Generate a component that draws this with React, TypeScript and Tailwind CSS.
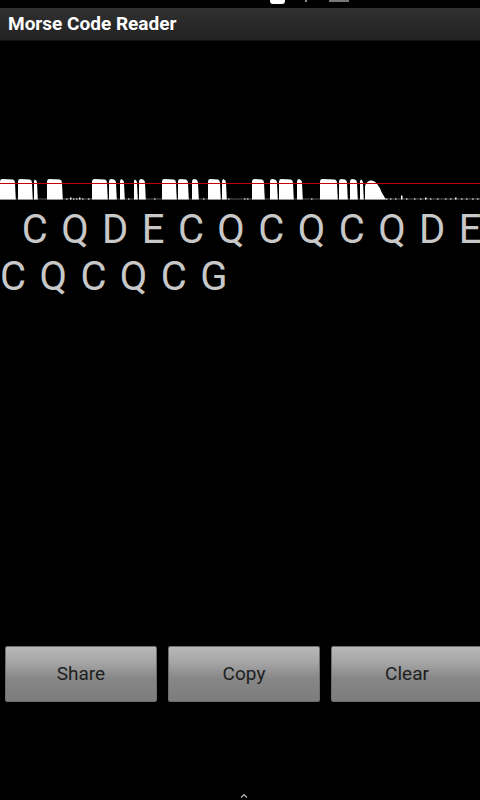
import React from "react";

const blocks: [number, number][] = [
  [0, 15], [18, 32], [34, 37], [47, 62], [92, 107], [109, 116], [120, 124],
  [134, 137], [139, 145], [162, 176], [178, 188], [192, 198], [208, 220],
  [222, 226], [252, 264], [270, 277], [279, 293], [297, 302], [320, 337],
  [339, 347], [350, 357], [360, 363],
];

const noise: [number, number][] = [
  [66, 1], [70, 2], [73, 1], [76, 1], [79, 2], [82, 1], [88, 1], [128, 1], [154, 1],
  [203, 1], [228, 1], [244, 1], [247, 1], [311, 1], [386, 1], [390, 1], [395, 1],
  [401, 4], [406, 1], [414, 1], [420, 1], [425, 2], [430, 1], [437, 1], [445, 1],
  [450, 1], [455, 2], [461, 1], [466, 1], [472, 1], [477, 1],
];

function Wave() {
  return (
    <svg width="480" height="24" viewBox="0 0 480 24" className="block">
      {blocks.map(([a, b], i) => (
        <path
          key={i}
          d={`M${a} 23.5 L${a} 5.5 Q${a} 3 ${a + 2} 3 L${b - 2} 3.5 Q${b} 4 ${b} 7 L${b + 0.8} 23.5 Z`}
          fill="#fff"
        />
      ))}
      <path d="M365 23.5 L365 10 Q367 4 372 4.5 Q378 6 382 17 L385 22 L386 23.5 Z" fill="#fff" />
      {noise.map(([x, h], i) => (
        <rect key={i} x={x} y={23.5 - h} width="1.5" height={h} fill="#fff" />
      ))}
      <rect x="0" y="22.5" width="480" height="1" fill="#fff" opacity="0.35" />
      <rect x="0" y="7" width="480" height="1" fill="#c00000" />
    </svg>
  );
}

function Btn({ label }: { label: string }) {
  return (
    <div className="w-[152px] h-[56px] shrink-0 rounded-[2px] border border-[#6e6e6e] bg-[linear-gradient(to_bottom,#b8b8b8_0%,#a4a4a4_30%,#878787_58%,#7c7c7c_100%)] flex items-center justify-center">
      <span className="text-[19px] text-[#1e1e1e]">{label}</span>
    </div>
  );
}

export default function App() {
  return (
    <div
      className="w-[480px] h-[800px] bg-black flex flex-col overflow-hidden"
      style={{ fontFamily: "Roboto, 'Noto Sans', sans-serif" }}
    >
      <div className="h-[8px] flex items-start">
        <div className="w-[270px]" />
        <div className="w-[15px] h-[4px] rounded-b-[3px] bg-white" />
        <div className="w-[20px]" />
        <div className="w-[2px] h-[2px] bg-[#888]" />
        <div className="w-[22px]" />
        <div className="w-[20px] h-[2px] bg-[#777]" />
      </div>
      <div className="h-[33px] bg-[linear-gradient(to_bottom,#303030,#222222)] border-b border-[#141414] flex items-center pl-[8px]">
        <span className="text-[19px] font-bold text-white">Morse Code Reader</span>
      </div>
      <div className="mt-[135px]">
        <Wave />
      </div>
      <div className="mt-[6px] text-[40px] leading-[47px] text-[#c8c8c8] tracking-[1.75px] whitespace-pre">
        <div className="pl-[10px]">{" C Q D E C Q C Q C Q D E"}</div>
        <div>{"C Q C Q C G"}</div>
      </div>
      <div className="mt-auto flex gap-[11px] pl-[5px]">
        <Btn label="Share" />
        <Btn label="Copy" />
        <Btn label="Clear" />
      </div>
      <div className="h-[91px]" />
      <div className="h-[7px] flex justify-center pl-[8px]">
        <svg width="8" height="5" viewBox="0 0 8 5">
          <path d="M1 4.5 L4 1.5 L7 4.5" stroke="#bbb" strokeWidth="1.2" fill="none" />
        </svg>
      </div>
    </div>
  );
}
